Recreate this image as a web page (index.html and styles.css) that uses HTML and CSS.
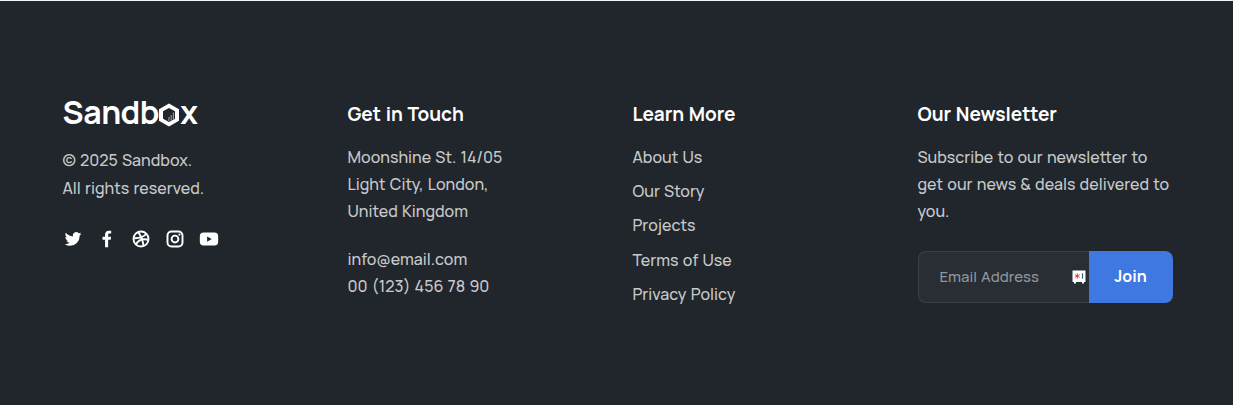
FILE: index.html
```html
<!DOCTYPE html>
<html lang="en">
<head>
<meta charset="utf-8">
<title>Sandbox</title>
<link rel="stylesheet" href="styles.css">
</head>
<body>
<footer class="footer">
  <section class="brand">
    <div class="logo"><span class="logo-text">Sandb</span><svg class="logo-hex" viewBox="0 0 20 24"><path fill="#fff" fill-rule="evenodd" d="M10 .5 20 6.200v11.600L10 23.500 0 17.800V6.200ZM10 4.900 4 8.300v7.400L10 19.100l6-3.400V8.300Z"/><path d="M10 18v-4M12.200 17.500v-5.500M14.400 16.500V9.500" stroke="#a5a8ab" stroke-width="1"/></svg><span>x</span></div>
    <p class="copyright">© 2025 Sandbox.<br>All rights reserved.</p>
    <nav class="social">
      <svg viewBox="0 0 24 24"><path d="M22 5.800a8.500 8.500 0 0 1-2.360.640 4.130 4.130 0 0 0 1.810-2.270 8.200 8.200 0 0 1-2.610 1 4.100 4.100 0 0 0-7 3.740 11.640 11.640 0 0 1-8.450-4.290 4.160 4.160 0 0 0-.550 2.070 4.090 4.090 0 0 0 1.820 3.410 4.050 4.050 0 0 1-1.860-.510v.050a4.100 4.100 0 0 0 3.300 4 3.900 3.900 0 0 1-1.100.170 5 5 0 0 1-.770-.070 4.110 4.110 0 0 0 3.830 2.840A8.220 8.220 0 0 1 3 18.340a8 8 0 0 1-1-.060 11.570 11.570 0 0 0 6.290 1.850A11.590 11.590 0 0 0 20 8.450v-.530a8.430 8.430 0 0 0 2-2.120Z"/></svg>
      <svg viewBox="0 0 24 24"><path d="M15.120 5.320H17V2.140A26.110 26.110 0 0 0 14.260 2c-2.720 0-4.580 1.660-4.580 4.700v2.620H6.610v3.560h3.070V22h3.680v-9.120h3.060l.460-3.560h-3.520V7.050c0-1.050.280-1.730 1.760-1.730Z"/></svg>
      <svg viewBox="0 0 24 24"><g fill="none" stroke="#fff" stroke-width="2.300"><circle cx="12" cy="12" r="9"/><path d="M8.500 3.700c3 3.600 5.500 9 6.600 16.700M18.500 5.700C15 10.200 9.500 11.300 3.100 11M5.800 18.500c3-5.500 8-7.500 15.100-5.500"/></g></svg>
      <svg viewBox="0 0 24 24"><g fill="none" stroke="#fff" stroke-width="2.300"><rect x="3" y="3" width="18" height="18" rx="4.800"/><circle cx="12" cy="12" r="4.100"/></g><circle cx="17.340" cy="6.660" r="1.300"/></svg>
      <svg viewBox="0 0 24 24"><path fill-rule="evenodd" d="M5.500 4.200h13A4.500 4.500 0 0 1 23 8.700v6.600a4.500 4.500 0 0 1-4.500 4.500h-13A4.500 4.500 0 0 1 1 15.300V8.700a4.500 4.500 0 0 1 4.500-4.500ZM9.740 8.850v6.300L15.300 12Z"/></svg>
    </nav>
  </section>
  <section>
    <h4 class="title">Get in Touch</h4>
    <address class="text">Moonshine St. 14/05<br>Light City, London,<br>United Kingdom</address>
    <p class="text contact">info@email.com<br>00 (123) 456 78 90</p>
  </section>
  <section>
    <h4 class="title">Learn More</h4>
    <ul class="links">
      <li>About Us</li>
      <li>Our Story</li>
      <li>Projects</li>
      <li>Terms of Use</li>
      <li>Privacy Policy</li>
    </ul>
  </section>
  <section>
    <h4 class="title">Our Newsletter</h4>
    <p class="text">Subscribe to our newsletter to<br>get our news &amp; deals delivered to<br>you.</p>
    <form class="signup">
      <div class="field"><span>Email Address</span><svg class="vault" viewBox="0 0 14 14"><path fill="#fff" d="M.500.500H13.500V12H12v1.500h-2V12H4v1.500H2V12H.500Z"/><path d="M5.300 3.300v5.400M2.900 4.600l4.800 2.800M7.700 4.600 2.900 7.400" stroke="#e0453a" stroke-width="1"/><path d="M10.500 3.300v5.400" stroke="#276678" stroke-width="1.200"/></svg></div>
      <button class="join" type="button">Join</button>
    </form>
  </section>
</footer>
</body>
</html>
```
FILE: styles.css
```css
* { box-sizing: border-box; }
body { margin: 0; background: #21262c; font-family: Manrope, Inter, sans-serif; font-size: 16px; font-weight: 500; word-spacing: 1px; color: #c8c9ca; }
.footer { height: 405px; border-top: 1px solid #f4f4f4; padding: 98px 60px 0 62.500px; display: grid; grid-template-columns: 285px 285px 285px 255px; align-items: start; white-space: nowrap; }
.logo { height: 32px; display: flex; align-items: center; color: #fff; font-size: 32px; font-weight: 700; line-height: 32px; margin-top: -3px; }
.logo-text { letter-spacing: -0.400px; }
.logo-hex { width: 20px; height: 24px; margin: 5px 1px 0 0; }
.copyright { margin: 18px 0 0; line-height: 28px; }
.social { display: flex; gap: 14px; margin-top: 27px; }
.social svg { width: 20px; height: 20px; fill: #fff; }
.title { margin: 0; padding-top: 2px; font-size: 19px; line-height: 26px; font-weight: 700; letter-spacing: -0.050px; color: #fff; }
.text { margin: 17px 0 0; line-height: 27px; font-style: normal; }
.contact { margin-top: 21px; }
.links { list-style: none; margin: 17px 0 0; padding: 0; line-height: 27px; }
.links li + li { margin-top: 7.200px; }
.signup { display: flex; width: 255px; height: 52px; margin-top: 26px; }
.field { flex: 1; display: flex; align-items: center; justify-content: space-between; padding: 0 3px 1px 21px; background: #292d34; border: 1px solid #3b4047; border-right: 0; border-radius: 8px 0 0 8px; color: #91959d; font-size: 15px; }
.vault { width: 14px; height: 14px; }
.join { width: 84px; border: 0; padding: 0 0 2px; border-radius: 0 8px 8px 0; background: #3f78e0; color: #fff; font: inherit; font-weight: 700; }
```
